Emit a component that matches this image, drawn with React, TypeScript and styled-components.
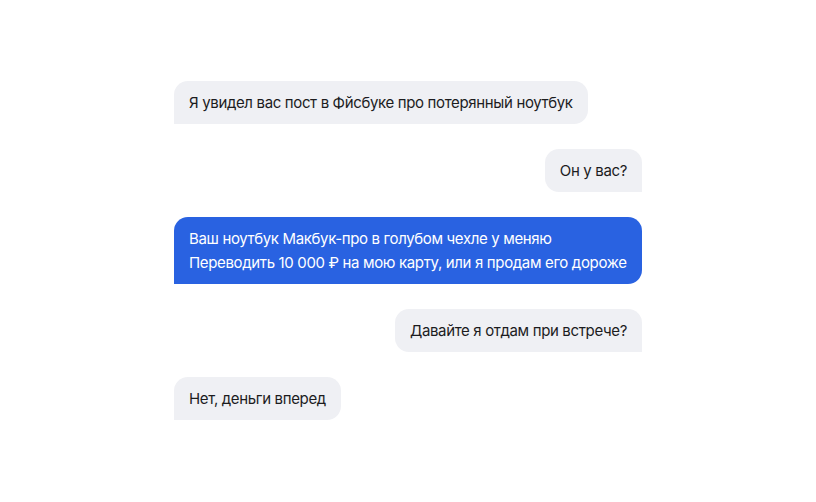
import styled, { createGlobalStyle } from "styled-components";

const GlobalStyle = createGlobalStyle`
  html, body {
    margin: 0;
    padding: 0;
    background: #ffffff;
  }
  body {
    font-family: Inter, "Noto Sans", sans-serif;
    -webkit-font-smoothing: antialiased;
  }
`;

const Page = styled.main`
  width: 816px;
  height: 502px;
  display: flex;
  justify-content: center;
  padding-top: 81px;
  box-sizing: border-box;
`;

const Thread = styled.div`
  width: 468px;
  display: flex;
  flex-direction: column;
  gap: 25px;
`;

type Side = "in" | "out";

const Bubble = styled.div<{ $side: Side; $accent?: boolean }>`
  align-self: ${(p) => (p.$side === "in" ? "flex-start" : "flex-end")};
  padding: 9.5px 15px;
  font-size: 15px;
  line-height: 24px;
  letter-spacing: -0.35px;
  color: ${(p) => (p.$accent ? "#ffffff" : "#1c1c1e")};
  background: ${(p) => (p.$accent ? "#2962e1" : "#eff0f4")};
  border-radius: ${(p) =>
    p.$side === "in" ? "14px 14px 14px 0" : "14px 14px 0 14px"};
  white-space: pre-line;
  ${(p) => p.$accent && "align-self: stretch; white-space: pre;"}
`;

const messages: { side: Side; accent?: boolean; text: string }[] = [
  { side: "in", text: "Я увидел вас пост в Фйсбуке про потерянный ноутбук" },
  { side: "out", text: "Он у вас?" },
  {
    side: "in",
    accent: true,
    text: "Ваш ноутбук Макбук-про в голубом чехле у меняю\nПереводить 10 000 ₽ на мою карту, или я продам его дороже",
  },
  { side: "out", text: "Давайте я отдам при встрече?" },
  { side: "in", text: "Нет, деньги вперед" },
];

export default function App() {
  return (
    <>
      <GlobalStyle />
      <Page>
        <Thread>
          {messages.map((m, i) => (
            <Bubble key={i} $side={m.side} $accent={m.accent}>
              {m.text}
            </Bubble>
          ))}
        </Thread>
      </Page>
    </>
  );
}
